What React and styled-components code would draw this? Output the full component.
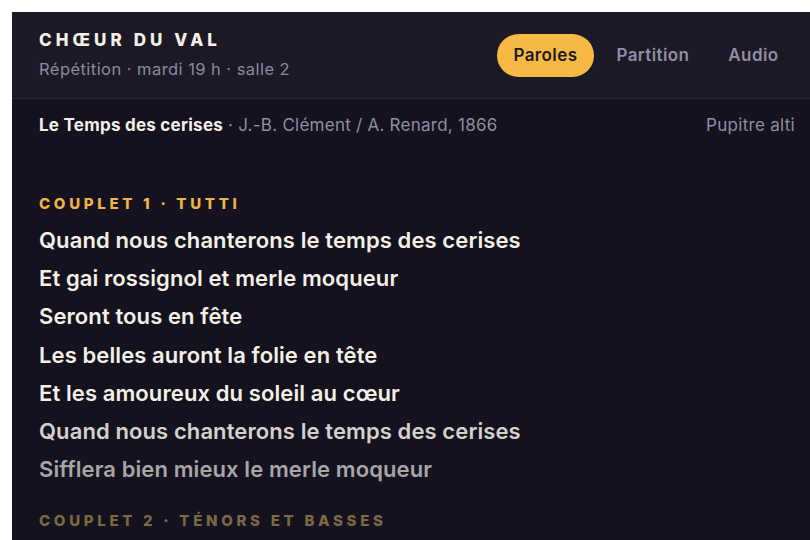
import styled, { createGlobalStyle } from 'styled-components'

const GlobalStyle = createGlobalStyle`
  html, body {
    margin: 0;
    background: #ffffff;
  }
  body {
    font-family: Inter, "Noto Sans", sans-serif;
    -webkit-font-smoothing: antialiased;
  }
`

const lines = [
  { text: 'Quand nous chanterons le temps des cerises', tone: 'bright' },
  { text: 'Et gai rossignol et merle moqueur', tone: 'bright' },
  { text: 'Seront tous en fête', tone: 'bright' },
  { text: 'Les belles auront la folie en tête', tone: 'bright' },
  { text: 'Et les amoureux du soleil au cœur', tone: 'bright' },
  { text: 'Quand nous chanterons le temps des cerises', tone: 'mid' },
  { text: 'Sifflera bien mieux le merle moqueur', tone: 'dim' },
]

const toneColors = {
  bright: '#f4f0e6',
  mid: '#d4d1cb',
  dim: '#a8a5a6',
}

function App() {
  return (
    <>
      <GlobalStyle />
      <Page>
        <Panel>
          <Header>
            <Brand>
              <Title>CHŒUR DU VAL</Title>
              <Subtitle>Répétition · mardi 19 h · salle 2</Subtitle>
            </Brand>
            <Tabs>
              <Tab active>Paroles</Tab>
              <Tab>Partition</Tab>
              <Tab>Audio</Tab>
            </Tabs>
          </Header>
          <SongBar>
            <SongInfo>
              <SongTitle>Le Temps des cerises</SongTitle> · J.-B. Clément / A. Renard, 1866
            </SongInfo>
            <Desk>Pupitre alti</Desk>
          </SongBar>
          <Lyrics>
            <Section>COUPLET 1 · TUTTI</Section>
            {lines.map((l, i) => (
              <Line key={i} tone={l.tone}>{l.text}</Line>
            ))}
            <Section faded>COUPLET 2 · TÉNORS ET BASSES</Section>
          </Lyrics>
        </Panel>
      </Page>
    </>
  )
}

export default App

const Page = styled.div`
  padding: 12px 0 0 12px;
  height: 540px;
  box-sizing: border-box;
  overflow: hidden;
`
const Panel = styled.div`
  background: #13121e;
  height: 100%;
  display: flex;
  flex-direction: column;
`
const Header = styled.header`
  display: flex;
  align-items: center;
  justify-content: space-between;
  height: 86px;
  padding: 0 15px 0 27px;
  background: #1b1926;
  border-bottom: 1px solid #2a2835;
`
const Brand = styled.div`
  display: flex;
  flex-direction: column;
  gap: 9px;
  margin-top: -2px;
`
const Title = styled.h1`
  margin: 0;
  font-size: 17px;
  line-height: 20px;
  font-weight: 800;
  letter-spacing: 4.1px;
  color: #f4f0e6;
`
const Subtitle = styled.div`
  font-size: 16.5px;
  line-height: 20px;
  letter-spacing: 0.45px;
  color: #8d8a9c;
`
const Tabs = styled.nav`
  display: flex;
  align-items: center;
  gap: 6px;
`
const Tab = styled.button`
  border: 0;
  font-family: inherit;
  font-size: 17px;
  letter-spacing: 0.4px;
  font-weight: 600;
  height: 43px;
  padding: 0 16.5px;
  border-radius: 22px;
  background: ${p => (p.active ? '#f7b943' : 'transparent')};
  color: ${p => (p.active ? '#1d1a22' : '#908ea3')};
`
const SongBar = styled.div`
  display: flex;
  align-items: center;
  justify-content: space-between;
  height: 52px;
  padding: 0 15px 0 27px;
`
const SongInfo = styled.div`
  font-size: 17px;
  letter-spacing: 0.25px;
  color: #908ea0;
`
const SongTitle = styled.span`
  font-weight: 700;
  color: #f4f0e6;
`
const Desk = styled.div`
  font-size: 17px;
  letter-spacing: 0.3px;
  color: #908ea0;
`
const Lyrics = styled.main`
  padding: 43px 27px 0;
  display: flex;
  flex-direction: column;
`
const Section = styled.div`
  font-size: 15px;
  font-weight: 800;
  letter-spacing: 3.7px;
  color: ${p => (p.faded ? '#7b6a40' : '#f2b445')};
  margin: ${p => (p.faded ? '23px 0 0' : '0 0 8px')};
`
const Line = styled.p`
  margin: 0;
  font-size: 22px;
  font-weight: 600;
  letter-spacing: 0.1px;
  line-height: 38.2px;
  color: ${p => toneColors[p.tone]};
`
